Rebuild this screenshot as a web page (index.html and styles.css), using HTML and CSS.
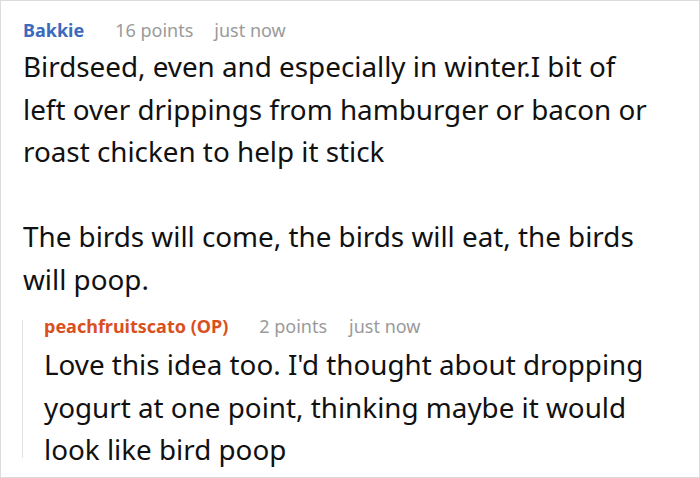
FILE: index.html
```html
<!DOCTYPE html>
<html>
<head>
<meta charset="utf-8">
<link rel="stylesheet" href="styles.css">
</head>
<body>
<div class="card">
  <div class="comment">
    <div class="meta">
      <span class="author">Bakkie</span>
      <span class="points">16 points</span>
      <span class="time">just now</span>
    </div>
    <div class="text">
      <p>Birdseed, even and especially in winter.I bit of left over drippings from hamburger or bacon or roast chicken to help it stick</p>
      <p>The birds will come, the birds will eat, the birds will poop.</p>
    </div>
    <div class="reply">
      <div class="meta">
        <span class="author op">peachfruitscato (OP)</span>
        <span class="points">2 points</span>
        <span class="time">just now</span>
      </div>
      <div class="text">
        <p>Love this idea too. I'd thought about dropping yogurt at one point, thinking maybe it would look like bird poop</p>
      </div>
    </div>
  </div>
</div>
</body>
</html>
```
FILE: styles.css
```css
html, body {
  margin: 0;
  padding: 0;
  background: #fff;
}
.card {
  box-sizing: border-box;
  width: 700px;
  height: 478px;
  border: 1px solid #dcdcdc;
  font-family: "Noto Sans", sans-serif;
  color: #111;
  overflow: hidden;
}
.comment {
  width: 633px;
  padding: 17px 0 0 22px;
}
.meta {
  display: flex;
  align-items: baseline;
  font-size: 18px;
  line-height: 24px;
  color: #9a9a9a;
}
.author {
  font-weight: 700;
  color: #3a6bbd;
  margin-right: 31px;
}
.author.op {
  color: #d9501f;
  margin-right: 31px;
}
.points {
  margin-right: 21px;
}
.reply .points {
  margin-right: 22px;
}
.text {
  font-size: 27.8px;
  line-height: 42.5px;
  margin-top: 3px;
}
.text p {
  margin: 0;
}
.text p + p {
  margin-top: 42.5px;
}
.reply {
  display: flow-root;
  margin-top: 20px;
  margin-left: -1px;
  border-left: 1px solid #e3e3e3;
  padding-left: 21px;
}
.reply .meta {
  line-height: 12px;
}
.reply .text {
  margin-top: 11px;
  margin-bottom: -12.5px;
}
```
